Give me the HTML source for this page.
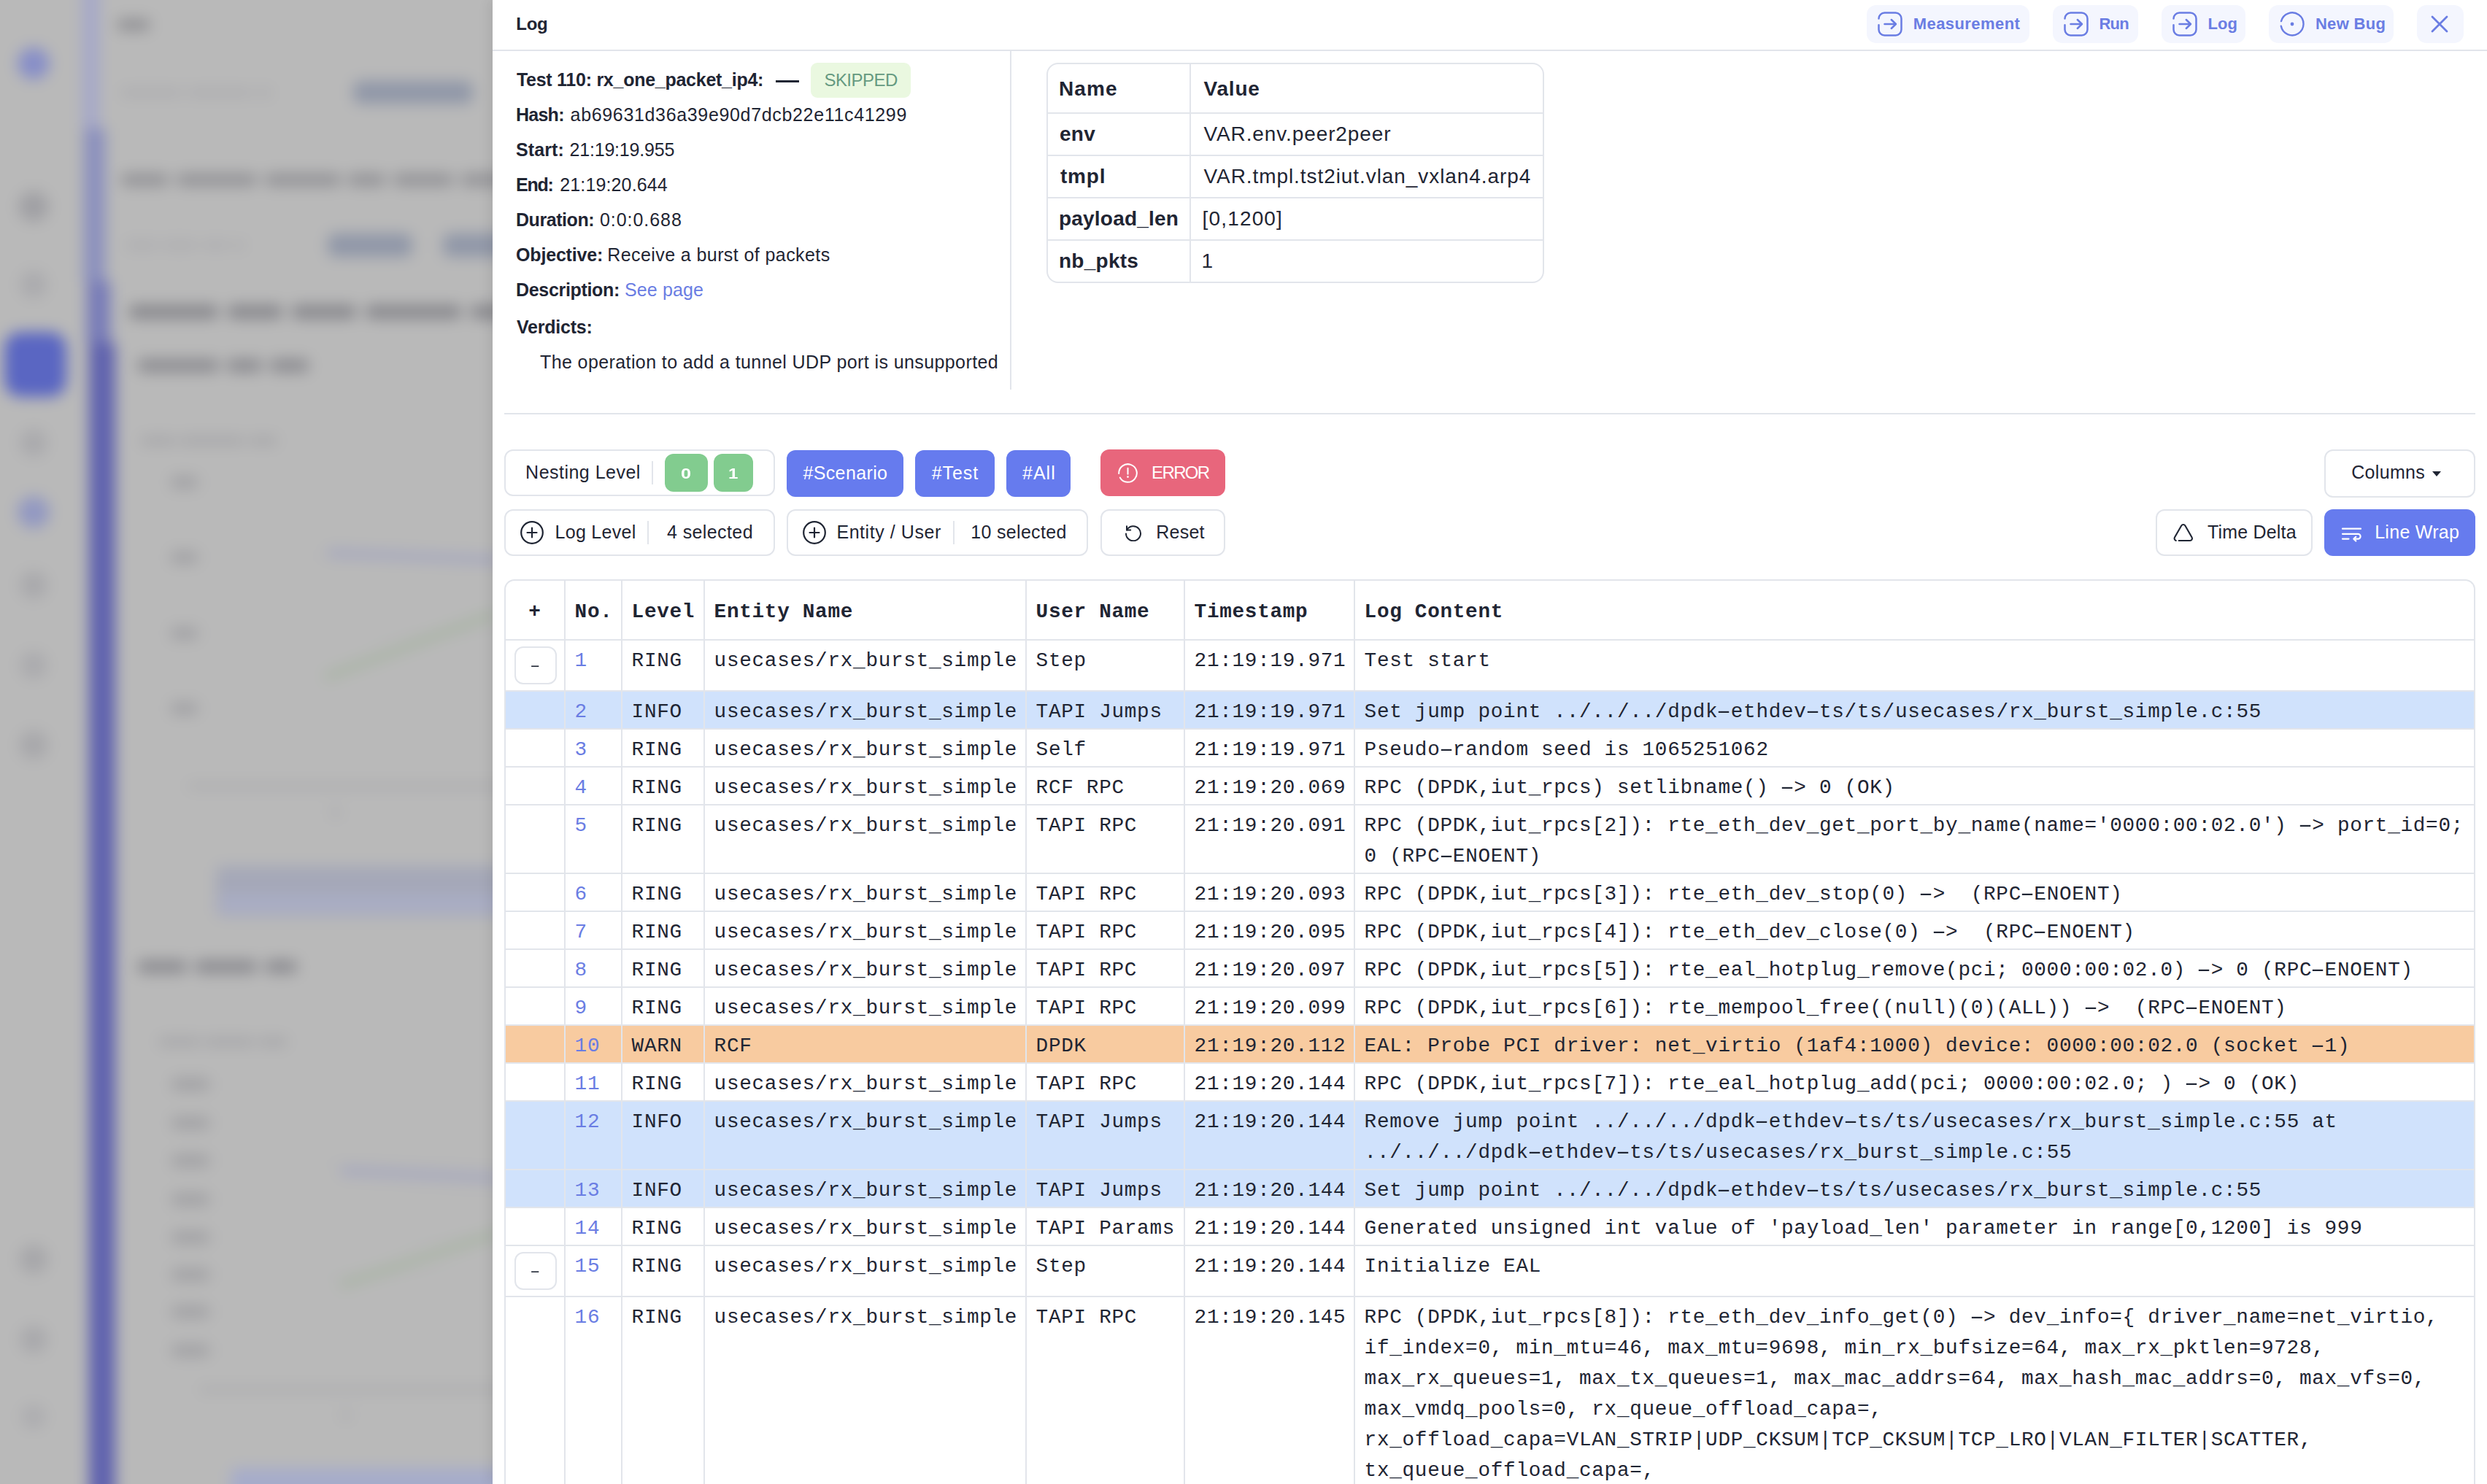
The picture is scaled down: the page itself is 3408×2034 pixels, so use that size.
<!DOCTYPE html>
<html lang="en">
<head>
<meta charset="utf-8">
<title>Log</title>
<style>
*{box-sizing:border-box;margin:0;padding:0}
html,body{width:3408px;height:2034px;overflow:hidden;background:#b9b9b9}
@media (max-width:1704px){html{zoom:.5}}
body{position:relative;font-family:"Liberation Sans",sans-serif;color:#1f2533}
.abs{position:absolute}
.x{position:absolute;white-space:pre}
#bg{position:absolute;left:0;top:0;width:720px;height:2034px;overflow:hidden;background:#b9b9b9}
#bgin{position:absolute;left:-60px;top:-60px;width:840px;height:2154px;background:#b9b9b9;filter:blur(10px)}
#bg i{position:absolute;display:block}
#panel{position:absolute;left:675px;top:0;width:2733px;height:2034px;background:#fff;box-shadow:-6px 0 14px rgba(0,0,0,.07);overflow:hidden}
#hdrline{position:absolute;left:0;top:68px;width:2733px;height:2px;background:#e2e5eb}
.hbtn{position:absolute;top:7px;height:52px;border-radius:13px;background:#f4f6fe}
.hbtn svg{position:absolute;left:15px;top:9px}
#vdiv{position:absolute;left:709px;top:70px;width:2px;height:464px;background:#e2e5eb}
#hdiv{position:absolute;left:16px;top:566px;width:2701px;height:2px;background:#e2e5eb}
#params{position:absolute;left:759px;top:86px;width:682px;height:302px;border:2px solid #e2e5eb;border-radius:16px}
#params i{position:absolute;display:block;background:#e2e5eb}
.box{position:absolute;height:64px;border:2px solid #e2e5eb;border-radius:12px;background:#fff}
.fill{position:absolute;height:64px;border-radius:12px;background:#667bee}
.sep{position:absolute;width:2px;height:32px;background:#e2e5eb}
#log{position:absolute;left:16px;top:794px;width:2701px;border:2px solid #e2e5eb;border-bottom:0;border-radius:14px 14px 0 0;font-family:"Liberation Mono",monospace;font-size:27.7px;line-height:42px;letter-spacing:.7px;overflow:hidden;height:1300px}
#log table{border-collapse:separate;border-spacing:0;table-layout:fixed;width:2697px}
#log td,#log th{border-right:2px solid #e2e5eb;border-bottom:2px solid #e2e5eb;padding:7.3px 0 .7px 12.6px;vertical-align:top;text-align:left;white-space:nowrap;font-weight:400}
#log td:last-child,#log th:last-child{border-right:0}
#log th{font-weight:700;height:82px;padding-top:22px}
#log tr.info td{background:#d0e2fc}
#log tr.warn td{background:#f8cba0}
#log td.n{color:#6a7de3}
#log td u{display:inline-block;text-decoration:none;transform:scaleX(1.9)}
.tog{display:block;width:58px;height:52px;border:2px solid #e2e5eb;border-radius:12px;margin:1px 0 7px -1px;text-align:center;line-height:51.5px;background:#fff}
.tog b{display:inline-block;font-weight:400;transform:scale(1.35,.75)}
</style>
</head>
<body>
<div id="bg"><div id="bgin"><i style="left:173px;top:20px;width:23px;height:216px;background:#a5a8c9"></i><i style="left:175px;top:236px;width:29px;height:210px;background:#8a8fbe"></i><i style="left:179px;top:446px;width:32px;height:84px;background:#777bb8"></i><i style="left:182px;top:530px;width:36px;height:1630px;background:#5f62ae"></i><i style="left:84px;top:125px;width:44px;height:44px;background:#878ec8;border-radius:22px"></i><i style="left:66px;top:515px;width:85px;height:89px;background:#5a66c2;border-radius:22px"></i><i style="left:85px;top:322px;width:42px;height:42px;background:#a0a0a4;border-radius:21px"></i><i style="left:87px;top:431px;width:38px;height:38px;background:#ababae;border-radius:19px"></i><i style="left:87px;top:648px;width:38px;height:38px;background:#aaaaad;border-radius:19px"></i><i style="left:87px;top:843px;width:38px;height:38px;background:#a9a9ac;border-radius:19px"></i><i style="left:87px;top:953px;width:38px;height:38px;background:#ababae;border-radius:19px"></i><i style="left:86px;top:1061px;width:40px;height:40px;background:#a8a8ab;border-radius:20px"></i><i style="left:86px;top:1766px;width:40px;height:40px;background:#a7a7aa;border-radius:20px"></i><i style="left:87px;top:1877px;width:38px;height:38px;background:#a9a9ac;border-radius:19px"></i><i style="left:89px;top:1985px;width:34px;height:34px;background:#adadb0;border-radius:17px"></i><i style="left:84px;top:740px;width:44px;height:44px;background:#9298c2;border-radius:22px"></i><i style="left:220px;top:86px;width:46px;height:16px;background:#8f8f93;border-radius:8px"></i><i style="left:225px;top:181px;width:85px;height:12px;background:#adadb0;border-radius:6.0px"></i><i style="left:316px;top:181px;width:90px;height:12px;background:#adadb0;border-radius:6.0px"></i><i style="left:411px;top:181px;width:22px;height:12px;background:#adadb0;border-radius:6.0px"></i><i style="left:544px;top:171px;width:164px;height:31px;background:#9097a8;border-radius:10px"></i><i style="left:225px;top:298px;width:67px;height:17px;background:#929296;border-radius:8.5px"></i><i style="left:301px;top:298px;width:112px;height:17px;background:#929296;border-radius:8.5px"></i><i style="left:422px;top:298px;width:106px;height:17px;background:#929296;border-radius:8.5px"></i><i style="left:536px;top:298px;width:53px;height:17px;background:#929296;border-radius:8.5px"></i><i style="left:598px;top:298px;width:84px;height:17px;background:#929296;border-radius:8.5px"></i><i style="left:691px;top:298px;width:69px;height:17px;background:#929296;border-radius:8.5px"></i><i style="left:232px;top:390px;width:45px;height:12px;background:#adadb0;border-radius:6.0px"></i><i style="left:282px;top:390px;width:49px;height:12px;background:#adadb0;border-radius:6.0px"></i><i style="left:337px;top:390px;width:36px;height:12px;background:#adadb0;border-radius:6.0px"></i><i style="left:378px;top:390px;width:18px;height:12px;background:#adadb0;border-radius:6.0px"></i><i style="left:509px;top:380px;width:116px;height:32px;background:#9097a8;border-radius:10px"></i><i style="left:667px;top:380px;width:113px;height:32px;background:#9097a8;border-radius:10px"></i><i style="left:236px;top:478px;width:124px;height:19px;background:#87878c;border-radius:9.5px"></i><i style="left:371px;top:478px;width:77px;height:19px;background:#87878c;border-radius:9.5px"></i><i style="left:459px;top:478px;width:90px;height:19px;background:#87878c;border-radius:9.5px"></i><i style="left:560px;top:478px;width:133px;height:19px;background:#87878c;border-radius:9.5px"></i><i style="left:704px;top:478px;width:56px;height:19px;background:#87878c;border-radius:9.5px"></i><i style="left:248px;top:552px;width:113px;height:18px;background:#8b8b90;border-radius:9.0px"></i><i style="left:370px;top:552px;width:50px;height:18px;background:#8b8b90;border-radius:9.0px"></i><i style="left:429px;top:552px;width:55px;height:18px;background:#8b8b90;border-radius:9.0px"></i><i style="left:252px;top:658px;width:50px;height:12px;background:#a6a6a9;border-radius:6.0px"></i><i style="left:306px;top:658px;width:90px;height:12px;background:#a6a6a9;border-radius:6.0px"></i><i style="left:401px;top:658px;width:39px;height:12px;background:#a6a6a9;border-radius:6.0px"></i><i style="left:293px;top:712px;width:39px;height:18px;background:#a2a2a5;border-radius:9px"></i><i style="left:350px;top:720px;width:430px;height:2px;background:#b4b4b6"></i><i style="left:293px;top:815px;width:39px;height:18px;background:#a2a2a5;border-radius:9px"></i><i style="left:350px;top:823px;width:430px;height:2px;background:#b4b4b6"></i><i style="left:293px;top:919px;width:39px;height:18px;background:#a2a2a5;border-radius:9px"></i><i style="left:350px;top:927px;width:430px;height:2px;background:#b4b4b6"></i><i style="left:293px;top:1022px;width:39px;height:18px;background:#a2a2a5;border-radius:9px"></i><i style="left:350px;top:1030px;width:430px;height:2px;background:#b4b4b6"></i><i style="left:508px;top:813px;width:240px;height:9px;background:#9fa2c0;transform-origin:0 50%;transform:rotate(2.5deg);border-radius:4px"></i><i style="left:505px;top:984px;width:250px;height:9px;background:#a5b3a0;transform-origin:0 50%;transform:rotate(-20.5deg);border-radius:3px"></i><i style="left:318px;top:1135px;width:462px;height:5px;background:#a3a3a7"></i><i style="left:512px;top:1165px;width:16px;height:16px;background:#aeaeb1;border-radius:8px"></i><i style="left:356px;top:1247px;width:424px;height:69px;background:#a5a8b8;border-radius:8px"></i><i style="left:360px;top:1286px;width:420px;height:26px;background:#a9adc4;border-radius:6px"></i><i style="left:248px;top:1376px;width:69px;height:18px;background:#8b8b90;border-radius:9.0px"></i><i style="left:326px;top:1376px;width:87px;height:18px;background:#8b8b90;border-radius:9.0px"></i><i style="left:422px;top:1376px;width:46px;height:18px;background:#8b8b90;border-radius:9.0px"></i><i style="left:277px;top:1482px;width:59px;height:12px;background:#a6a6a9;border-radius:6.0px"></i><i style="left:340px;top:1482px;width:69px;height:12px;background:#a6a6a9;border-radius:6.0px"></i><i style="left:414px;top:1482px;width:40px;height:12px;background:#a6a6a9;border-radius:6.0px"></i><i style="left:294px;top:1537px;width:54px;height:18px;background:#a2a2a5;border-radius:9px"></i><i style="left:360px;top:1545px;width:420px;height:2px;background:#b4b4b6"></i><i style="left:294px;top:1590px;width:54px;height:18px;background:#a2a2a5;border-radius:9px"></i><i style="left:360px;top:1598px;width:420px;height:2px;background:#b4b4b6"></i><i style="left:294px;top:1642px;width:54px;height:18px;background:#a2a2a5;border-radius:9px"></i><i style="left:360px;top:1650px;width:420px;height:2px;background:#b4b4b6"></i><i style="left:294px;top:1695px;width:54px;height:18px;background:#a2a2a5;border-radius:9px"></i><i style="left:360px;top:1703px;width:420px;height:2px;background:#b4b4b6"></i><i style="left:294px;top:1747px;width:54px;height:18px;background:#a2a2a5;border-radius:9px"></i><i style="left:360px;top:1755px;width:420px;height:2px;background:#b4b4b6"></i><i style="left:294px;top:1798px;width:54px;height:18px;background:#a2a2a5;border-radius:9px"></i><i style="left:360px;top:1806px;width:420px;height:2px;background:#b4b4b6"></i><i style="left:294px;top:1849px;width:54px;height:18px;background:#a2a2a5;border-radius:9px"></i><i style="left:360px;top:1857px;width:420px;height:2px;background:#b4b4b6"></i><i style="left:294px;top:1902px;width:54px;height:18px;background:#a2a2a5;border-radius:9px"></i><i style="left:360px;top:1910px;width:420px;height:2px;background:#b4b4b6"></i><i style="left:526px;top:1660px;width:225px;height:9px;background:#9fa2c0;transform-origin:0 50%;transform:rotate(2.8deg);border-radius:4px"></i><i style="left:526px;top:1817px;width:230px;height:9px;background:#a5b3a0;transform-origin:0 50%;transform:rotate(-18.3deg);border-radius:3px"></i><i style="left:334px;top:1962px;width:446px;height:5px;background:#a3a3a7"></i><i style="left:526px;top:1991px;width:16px;height:16px;background:#aeaeb1;border-radius:8px"></i><i style="left:376px;top:2072px;width:404px;height:88px;background:#a6acca;border-radius:8px"></i></div></div>
<div id="panel">
<div id="hdrline"></div>
<span class="x" style="left:32.2px;top:20.9px;font-size:24px;line-height:24px;font-weight:700;letter-spacing:-0.2px;">Log</span>
<div class="hbtn" style="left:1883px;width:223px"><svg width="34" height="34" viewBox="0 0 34 34" fill="none" stroke="#6a7de3" stroke-width="2.5" stroke-linecap="round" stroke-linejoin="round"><path d="M1.5 9.400a8 8 0 0 1 8-7.900h15a8 8 0 0 1 8 8v15a8 8 0 0 1-8 8h-15a8 8 0 0 1-8-8v-6.300"/><path d="M9.500 17h15.500M18.800 11l6.200 6-6.200 6"/></svg></div><span class="x" style="left:1946.8px;top:21.9px;font-size:22px;line-height:22px;font-weight:700;letter-spacing:0.42px;color:#6a7de3;">Measurement</span>
<div class="hbtn" style="left:2138px;width:117px"><svg width="34" height="34" viewBox="0 0 34 34" fill="none" stroke="#6a7de3" stroke-width="2.5" stroke-linecap="round" stroke-linejoin="round"><path d="M1.5 9.400a8 8 0 0 1 8-7.900h15a8 8 0 0 1 8 8v15a8 8 0 0 1-8 8h-15a8 8 0 0 1-8-8v-6.300"/><path d="M9.500 17h15.500M18.800 11l6.200 6-6.200 6"/></svg></div><span class="x" style="left:2201.4px;top:21.9px;font-size:22px;line-height:22px;font-weight:700;letter-spacing:-0.7px;color:#6a7de3;">Run</span>
<div class="hbtn" style="left:2287px;width:115px"><svg width="34" height="34" viewBox="0 0 34 34" fill="none" stroke="#6a7de3" stroke-width="2.5" stroke-linecap="round" stroke-linejoin="round"><path d="M1.5 9.400a8 8 0 0 1 8-7.900h15a8 8 0 0 1 8 8v15a8 8 0 0 1-8 8h-15a8 8 0 0 1-8-8v-6.300"/><path d="M9.500 17h15.500M18.800 11l6.200 6-6.200 6"/></svg></div><span class="x" style="left:2350.6px;top:21.9px;font-size:22px;line-height:22px;font-weight:700;color:#6a7de3;">Log</span>
<div class="hbtn" style="left:2434px;width:171px"><svg width="34" height="34" viewBox="0 0 34 34" fill="none" stroke="#6a7de3" stroke-width="2.4" stroke-linecap="round"><path d="M2 13A15.5 15.5 0 1 1 1.800 19.800"/><circle cx="17" cy="17" r="2.4" fill="#6a7de3" stroke="none"/></svg></div><span class="x" style="left:2497.9px;top:21.9px;font-size:22px;line-height:22px;font-weight:700;letter-spacing:0.32px;color:#6a7de3;">New Bug</span>
<div class="hbtn" style="left:2637px;width:64px"><svg width="24" height="24" viewBox="0 0 24 24" fill="none" stroke="#6a7de3" stroke-width="2.8" stroke-linecap="round" style="left:19px;top:14px"><path d="M2 2l20 20M22 2L2 22"/></svg></div>
<span class="x" style="left:32.9px;top:96.8px;font-size:25px;line-height:25px;font-weight:700;letter-spacing:-0.26px;">Test 110: rx_one_packet_ip4:</span>
<span class="abs" style="left:387.5px;top:109.5px;width:32px;height:3.4px;background:#1f2533"></span>
<span class="abs" style="left:436px;top:86px;width:137px;height:48px;border-radius:9px;background:#eaf8e0"></span>
<span class="x" style="left:454.4px;top:97.7px;font-size:24px;line-height:24px;letter-spacing:-0.52px;color:#659a80;">SKIPPED</span>
<span class="x" style="left:32.0px;top:144.8px;font-size:25px;line-height:25px;font-weight:700;letter-spacing:-0.75px;">Hash:</span>
<span class="x" style="left:106.6px;top:144.8px;font-size:25px;line-height:25px;letter-spacing:0.66px;">ab69631d36a39e90d7dcb22e11c41299</span>
<span class="x" style="left:32.0px;top:192.8px;font-size:25px;line-height:25px;font-weight:700;letter-spacing:0.12px;">Start:</span>
<span class="x" style="left:105.5px;top:192.8px;font-size:25px;line-height:25px;letter-spacing:-0.19px;">21:19:19.955</span>
<span class="x" style="left:32.0px;top:240.8px;font-size:25px;line-height:25px;font-weight:700;letter-spacing:-1.2px;">End:</span>
<span class="x" style="left:92.3px;top:240.8px;font-size:25px;line-height:25px;letter-spacing:0.13px;">21:19:20.644</span>
<span class="x" style="left:32.0px;top:288.8px;font-size:25px;line-height:25px;font-weight:700;letter-spacing:-0.44px;">Duration:</span>
<span class="x" style="left:147.0px;top:288.8px;font-size:25px;line-height:25px;letter-spacing:0.94px;">0:0:0.688</span>
<span class="x" style="left:32.0px;top:336.8px;font-size:25px;line-height:25px;font-weight:700;letter-spacing:-0.17px;">Objective:</span>
<span class="x" style="left:157.3px;top:336.8px;font-size:25px;line-height:25px;letter-spacing:0.41px;">Receive a burst of packets</span>
<span class="x" style="left:32.0px;top:384.8px;font-size:25px;line-height:25px;font-weight:700;letter-spacing:-0.32px;">Description:</span>
<span class="x" style="left:181.0px;top:384.8px;font-size:25px;line-height:25px;letter-spacing:0.14px;color:#6a7de3;">See page</span>
<span class="x" style="left:33.0px;top:436.3px;font-size:25px;line-height:25px;font-weight:700;letter-spacing:-0.22px;">Verdicts:</span>
<span class="x" style="left:65.0px;top:484.3px;font-size:25px;line-height:25px;letter-spacing:0.4px;">The operation to add a tunnel UDP port is unsupported</span>
<div id="vdiv"></div><div id="hdiv"></div>
<div id="params"><i style="left:194px;top:0;width:2px;height:298px"></i><i style="left:0;top:66px;width:678px;height:2px"></i><i style="left:0;top:124px;width:678px;height:2px"></i><i style="left:0;top:182px;width:678px;height:2px"></i><i style="left:0;top:240px;width:678px;height:2px"></i></div>
<span class="x" style="left:776.0px;top:107.6px;font-size:28px;line-height:28px;font-weight:700;letter-spacing:1.07px;">Name</span>
<span class="x" style="left:974.5px;top:107.6px;font-size:28px;line-height:28px;font-weight:700;letter-spacing:0.8px;">Value</span>
<span class="x" style="left:777.0px;top:170.3px;font-size:28px;line-height:28px;font-weight:700;letter-spacing:0.25px;">env</span>
<span class="x" style="left:974.5px;top:170.3px;font-size:28px;line-height:28px;letter-spacing:0.89px;">VAR.env.peer2peer</span>
<span class="x" style="left:778.0px;top:228.3px;font-size:28px;line-height:28px;font-weight:700;letter-spacing:0.77px;">tmpl</span>
<span class="x" style="left:974.5px;top:228.3px;font-size:28px;line-height:28px;letter-spacing:0.93px;">VAR.tmpl.tst2iut.vlan_vxlan4.arp4</span>
<span class="x" style="left:776.0px;top:286.3px;font-size:28px;line-height:28px;font-weight:700;letter-spacing:0.2px;">payload_len</span>
<span class="x" style="left:972.5px;top:286.3px;font-size:28px;line-height:28px;letter-spacing:1.17px;">[0,1200]</span>
<span class="x" style="left:776.0px;top:344.3px;font-size:28px;line-height:28px;font-weight:700;letter-spacing:0.25px;">nb_pkts</span>
<span class="x" style="left:971.5px;top:344.3px;font-size:28px;line-height:28px;">1</span>
<div class="box" style="left:16px;top:616px;width:371px;height:64px"></div>
<span class="x" style="left:45.1px;top:635.1px;font-size:25px;line-height:25px;letter-spacing:0.48px;">Nesting Level</span>
<span class="sep" style="left:218px;top:632px"></span>
<div class="fill" style="left:236px;top:622px;width:59px;height:52px;background:#82cc8f"></div>
<div class="fill" style="left:303px;top:622px;width:54px;height:52px;background:#82cc8f"></div>
<span class="x" style="left:258.1px;top:638.0px;font-size:21px;line-height:21px;font-weight:700;color:#fff;transform:scaleX(1.2);transform-origin:0 0;">0</span><span class="x" style="left:323.0px;top:638.0px;font-size:21px;line-height:21px;font-weight:700;color:#fff;transform:scaleX(1.15);transform-origin:0 0;">1</span>
<div class="fill" style="left:403px;top:617px;width:160px;height:64px"></div><span class="x" style="left:425.4px;top:635.6px;font-size:25px;line-height:25px;letter-spacing:0.38px;color:#fff;">#Scenario</span>
<div class="fill" style="left:579px;top:617px;width:109px;height:64px"></div><span class="x" style="left:601.8px;top:635.6px;font-size:25px;line-height:25px;letter-spacing:0.9px;color:#fff;">#Test</span>
<div class="fill" style="left:704px;top:617px;width:88px;height:64px"></div><span class="x" style="left:726.1px;top:635.6px;font-size:25px;line-height:25px;letter-spacing:0.97px;color:#fff;">#All</span>
<div class="fill" style="left:833px;top:616px;width:171px;height:64px;background:#e8667c"></div><span class="x" style="left:903.1px;top:636.0px;font-size:24px;line-height:24px;letter-spacing:-1.65px;color:#fff;">ERROR</span>
<svg class="abs" style="left:857px;top:635px" width="27" height="27" viewBox="0 0 27 27" fill="none" stroke="#fff" stroke-width="2" stroke-linecap="round"><path d="M1.21 13.93A12.3 12.3 0 1 1 2.85 19.65"/><path d="M13.5 6.800v8"/><circle cx="13.5" cy="18.600" r="1.3" fill="#fff" stroke="none"/></svg>
<div class="box" style="left:2510px;top:616px;width:207px;height:66px"></div><span class="x" style="left:2547.2px;top:635.1px;font-size:25px;line-height:25px;letter-spacing:0.33px;">Columns</span>
<span class="abs" style="left:2658px;top:646px;width:0;height:0;border-left:6.5px solid transparent;border-right:6.5px solid transparent;border-top:7px solid #1f2533"></span>
<div class="box" style="left:16px;top:698px;width:371px;height:64px"></div><svg class="abs" style="left:38px;top:714px" width="32" height="32" viewBox="0 0 32 32" fill="none" stroke="#1f2533" stroke-width="2.2" stroke-linecap="round"><circle cx="16" cy="16" r="14.8"/><path d="M9.5 16h13M16 9.5v13"/></svg><span class="x" style="left:85.5px;top:716.7px;font-size:25px;line-height:25px;letter-spacing:0.29px;">Log Level</span><span class="sep" style="left:212px;top:714px"></span><span class="x" style="left:239.0px;top:716.7px;font-size:25px;line-height:25px;letter-spacing:0.4px;">4 selected</span>
<div class="box" style="left:403px;top:698px;width:413px;height:64px"></div><svg class="abs" style="left:425px;top:714px" width="32" height="32" viewBox="0 0 32 32" fill="none" stroke="#1f2533" stroke-width="2.2" stroke-linecap="round"><circle cx="16" cy="16" r="14.8"/><path d="M9.5 16h13M16 9.5v13"/></svg><span class="x" style="left:471.4px;top:716.7px;font-size:25px;line-height:25px;letter-spacing:0.56px;">Entity / User</span><span class="sep" style="left:631px;top:714px"></span><span class="x" style="left:655.2px;top:716.7px;font-size:25px;line-height:25px;letter-spacing:0.33px;">10 selected</span>
<div class="box" style="left:833px;top:698px;width:171px;height:64px"></div><svg class="abs" style="left:866px;top:718px" width="24" height="24" viewBox="0 0 24 24" fill="none" stroke="#1f2533" stroke-width="2" stroke-linecap="round" stroke-linejoin="round"><path d="M3.2 8.5A10 10 0 1 1 2 13.5"/><path d="M3 3.300v5.200h5.200"/></svg><span class="x" style="left:909.3px;top:716.7px;font-size:25px;line-height:25px;letter-spacing:0.22px;">Reset</span>
<div class="box" style="left:2279px;top:698px;width:215px;height:64px"></div><svg class="abs" style="left:2302.4px;top:716.7px" width="30" height="26" viewBox="0 0 30 26" fill="none" stroke="#1f2533" stroke-width="2.1" stroke-linecap="round" stroke-linejoin="round"><path d="M8.700 24H24a3 3 0 0 0 2.600-4.500L17.400 3.500a3 3 0 0 0-5.200 0L3 19.500A3 3 0 0 0 4.800 23.900"/></svg><span class="x" style="left:2350.0px;top:716.7px;font-size:25px;line-height:25px;letter-spacing:0.19px;">Time Delta</span>
<div class="fill" style="left:2510px;top:698px;width:207px;height:64px"></div><svg class="abs" style="left:2533.3px;top:719px" width="30" height="25" viewBox="0 0 30 25" fill="none" stroke="#fff" stroke-width="2.2" stroke-linecap="round" stroke-linejoin="round"><path d="M2 5.700h25M2 12.800h21.200a3.400 3.400 0 0 1 0 6.800h-5M2 19.600h8.500"/><path d="M20.300 16.700l-2.900 2.900 2.900 2.900"/></svg><span class="x" style="left:2579.2px;top:716.7px;font-size:25px;line-height:25px;letter-spacing:0.28px;color:#fff;">Line Wrap</span>
<div id="log"><table>
<colgroup><col style="width:82px"><col style="width:78px"><col style="width:113px"><col style="width:441px"><col style="width:217px"><col style="width:233px"><col></colgroup>
<tr><th style="text-align:center;padding-left:0">+</th><th>No.</th><th>Level</th><th>Entity Name</th><th>User Name</th><th>Timestamp</th><th>Log Content</th></tr>
<tr><td><span class="tog"><b>-</b></span></td><td class="n">1</td><td>RING</td><td>usecases/rx_burst_simple</td><td>Step</td><td>21:19:19.971</td><td>Test start</td></tr>
<tr class="info"><td></td><td class="n">2</td><td>INFO</td><td>usecases/rx_burst_simple</td><td>TAPI Jumps</td><td>21:19:19.971</td><td>Set jump point ../../../dpdk<u>-</u>ethdev<u>-</u>ts/ts/usecases/rx_burst_simple.c:55</td></tr>
<tr><td></td><td class="n">3</td><td>RING</td><td>usecases/rx_burst_simple</td><td>Self</td><td>21:19:19.971</td><td>Pseudo<u>-</u>random seed is 1065251062</td></tr>
<tr><td></td><td class="n">4</td><td>RING</td><td>usecases/rx_burst_simple</td><td>RCF RPC</td><td>21:19:20.069</td><td>RPC (DPDK,iut_rpcs) setlibname() <u>-</u>&gt; 0 (OK)</td></tr>
<tr><td></td><td class="n">5</td><td>RING</td><td>usecases/rx_burst_simple</td><td>TAPI RPC</td><td>21:19:20.091</td><td>RPC (DPDK,iut_rpcs[2]): rte_eth_dev_get_port_by_name(name='0000:00:02.0') <u>-</u>&gt; port_id=0;<br>0 (RPC<u>-</u>ENOENT)</td></tr>
<tr><td></td><td class="n">6</td><td>RING</td><td>usecases/rx_burst_simple</td><td>TAPI RPC</td><td>21:19:20.093</td><td>RPC (DPDK,iut_rpcs[3]): rte_eth_dev_stop(0) <u>-</u>&gt; &nbsp;(RPC<u>-</u>ENOENT)</td></tr>
<tr><td></td><td class="n">7</td><td>RING</td><td>usecases/rx_burst_simple</td><td>TAPI RPC</td><td>21:19:20.095</td><td>RPC (DPDK,iut_rpcs[4]): rte_eth_dev_close(0) <u>-</u>&gt; &nbsp;(RPC<u>-</u>ENOENT)</td></tr>
<tr><td></td><td class="n">8</td><td>RING</td><td>usecases/rx_burst_simple</td><td>TAPI RPC</td><td>21:19:20.097</td><td>RPC (DPDK,iut_rpcs[5]): rte_eal_hotplug_remove(pci; 0000:00:02.0) <u>-</u>&gt; 0 (RPC<u>-</u>ENOENT)</td></tr>
<tr><td></td><td class="n">9</td><td>RING</td><td>usecases/rx_burst_simple</td><td>TAPI RPC</td><td>21:19:20.099</td><td>RPC (DPDK,iut_rpcs[6]): rte_mempool_free((null)(0)(ALL)) <u>-</u>&gt; &nbsp;(RPC<u>-</u>ENOENT)</td></tr>
<tr class="warn"><td></td><td class="n">10</td><td>WARN</td><td>RCF</td><td>DPDK</td><td>21:19:20.112</td><td>EAL: Probe PCI driver: net_virtio (1af4:1000) device: 0000:00:02.0 (socket <u>-</u>1)</td></tr>
<tr><td></td><td class="n">11</td><td>RING</td><td>usecases/rx_burst_simple</td><td>TAPI RPC</td><td>21:19:20.144</td><td>RPC (DPDK,iut_rpcs[7]): rte_eal_hotplug_add(pci; 0000:00:02.0; ) <u>-</u>&gt; 0 (OK)</td></tr>
<tr class="info"><td></td><td class="n">12</td><td>INFO</td><td>usecases/rx_burst_simple</td><td>TAPI Jumps</td><td>21:19:20.144</td><td>Remove jump point ../../../dpdk<u>-</u>ethdev<u>-</u>ts/ts/usecases/rx_burst_simple.c:55 at<br>../../../dpdk<u>-</u>ethdev<u>-</u>ts/ts/usecases/rx_burst_simple.c:55</td></tr>
<tr class="info"><td></td><td class="n">13</td><td>INFO</td><td>usecases/rx_burst_simple</td><td>TAPI Jumps</td><td>21:19:20.144</td><td>Set jump point ../../../dpdk<u>-</u>ethdev<u>-</u>ts/ts/usecases/rx_burst_simple.c:55</td></tr>
<tr><td></td><td class="n">14</td><td>RING</td><td>usecases/rx_burst_simple</td><td>TAPI Params</td><td>21:19:20.144</td><td>Generated unsigned int value of 'payload_len' parameter in range[0,1200] is 999</td></tr>
<tr><td><span class="tog"><b>-</b></span></td><td class="n">15</td><td>RING</td><td>usecases/rx_burst_simple</td><td>Step</td><td>21:19:20.144</td><td>Initialize EAL</td></tr>
<tr><td></td><td class="n">16</td><td>RING</td><td>usecases/rx_burst_simple</td><td>TAPI RPC</td><td>21:19:20.145</td><td>RPC (DPDK,iut_rpcs[8]): rte_eth_dev_info_get(0) <u>-</u>&gt; dev_info={ driver_name=net_virtio,<br>if_index=0, min_mtu=46, max_mtu=9698, min_rx_bufsize=64, max_rx_pktlen=9728,<br>max_rx_queues=1, max_tx_queues=1, max_mac_addrs=64, max_hash_mac_addrs=0, max_vfs=0,<br>max_vmdq_pools=0, rx_queue_offload_capa=,<br>rx_offload_capa=VLAN_STRIP|UDP_CKSUM|TCP_CKSUM|TCP_LRO|VLAN_FILTER|SCATTER,<br>tx_queue_offload_capa=,<br>tx_offload_capa=VLAN_INSERT|UDP_CKSUM|TCP_CKSUM|TCP_TSO|MULTI_SEGS,</td></tr>
</table></div>
</div>
</body>
</html>
